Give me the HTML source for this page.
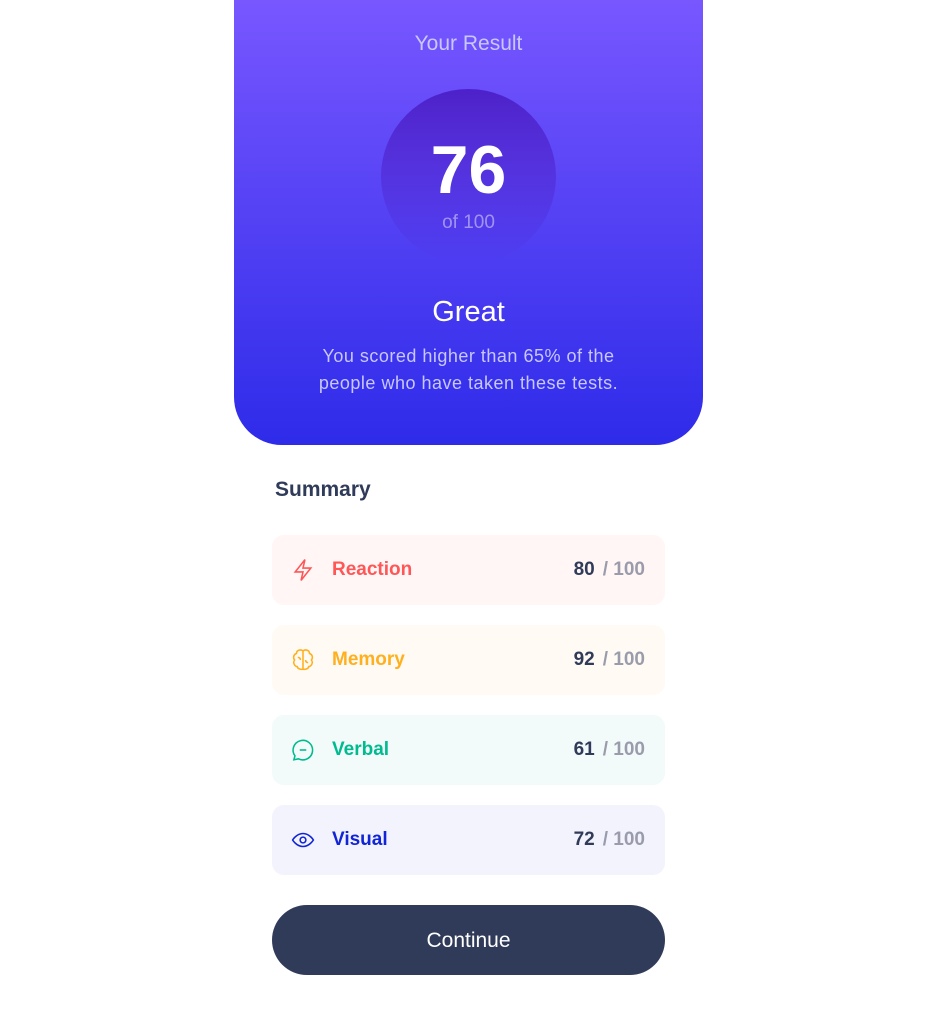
<!DOCTYPE html>
<html><head><meta charset="utf-8"><style>
*{margin:0;padding:0;box-sizing:border-box}
body{width:937px;height:1012px;background:#fff;font-family:"Liberation Sans",sans-serif;position:relative;overflow:hidden}
.hero{position:absolute;left:234px;top:0;width:469px;height:445px;border-radius:0 0 48px 48px;background:linear-gradient(#7857FF,#2E2BE9);text-align:center}
.yr{position:absolute;top:32px;width:100%;color:#c8c7ff;font-size:21px}
.circ{position:absolute;left:147px;top:89px;width:175px;height:175px;border-radius:50%;background:linear-gradient(#4D21C9,rgba(37,33,201,0) 100%)}
.n{position:absolute;top:42px;width:100%;color:#fff;font-size:68px;font-weight:bold}
.of{position:absolute;top:123px;width:100%;color:rgba(255,255,255,.45);font-size:19px}
.gr{position:absolute;top:296px;width:100%;color:#fff;font-size:29px}
.ds{position:absolute;top:343px;left:70px;right:70px;color:#c8c7ff;font-size:18px;line-height:27px;letter-spacing:.5px}
.sum{position:absolute;left:275px;top:478px;font-size:21px;font-weight:bold;color:#303B59}
.row{position:absolute;left:272px;width:393px;height:70px;border-radius:12px;display:flex;align-items:center;padding:0 20px;font-size:19px;font-weight:bold}
.row svg{width:26px;height:26px;margin-right:16px;margin-left:-2px}
.row .s{margin-left:auto;color:#303B59}
.row .s span{color:#9a9cab;margin-left:8px}
.btn{position:absolute;left:272px;top:905px;width:393px;height:70px;border-radius:35px;background:#303B59;color:#fff;font-size:21px;text-align:center;line-height:72px}
</style></head><body>
<div class="hero">
<div class="yr">Your Result</div>
<div class="circ"><div class="n">76</div><div class="of">of 100</div></div>
<div class="gr">Great</div>
<div class="ds">You scored higher than 65% of the people who have taken these tests.</div>
</div>
<div class="sum">Summary</div>
<div class="row" style="top:535px;background:#FFF6F5;color:#FF5757"><svg viewBox="0 0 20 20" fill="none" stroke="#F55" stroke-width="1.2"><path d="M11.5 2L4 11.5h6L8.5 18 16 8.5h-6z"/></svg>Reaction<div class="s">80<span>/ 100</span></div></div>
<div class="row" style="top:625px;background:#FFFBF4;color:#FFB01F"><svg viewBox="0 0 20 20" fill="none" stroke="#FFB01F" stroke-width="1.2"><path d="M10 3v14M10 3c-2-1.5-5-.5-5 2-2 .5-3 3-1.5 5-1.5 2 0 5 2 5 .5 2 3 2.5 4.5 2M10 3c2-1.5 5-.5 5 2 2 .5 3 3 1.5 5 1.5 2 0 5-2 5-.5 2-3 2.5-4.5 2M6 8c1 0 2 .5 2 2M14 12c-1 0-2-.5-2-2"/></svg>Memory<div class="s">92<span>/ 100</span></div></div>
<div class="row" style="top:715px;background:#F2FBFA;color:#00BB8F"><svg viewBox="0 0 20 20" fill="none" stroke="#00BB8F" stroke-width="1.2"><path d="M3 17.5l.8-3A7.5 7.5 0 1 1 6.5 16.8z"/><path d="M7.5 10h5"/></svg>Verbal<div class="s">61<span>/ 100</span></div></div>
<div class="row" style="top:805px;background:#F3F3FD;color:#1125D6"><svg viewBox="0 0 20 20" fill="none" stroke="#1125D6" stroke-width="1.2"><path d="M2 10s3-5 8-5 8 5 8 5-3 5-8 5-8-5-8-5z"/><circle cx="10" cy="10" r="2.2"/></svg>Visual<div class="s">72<span>/ 100</span></div></div>
<div class="btn">Continue</div>
</body></html>
